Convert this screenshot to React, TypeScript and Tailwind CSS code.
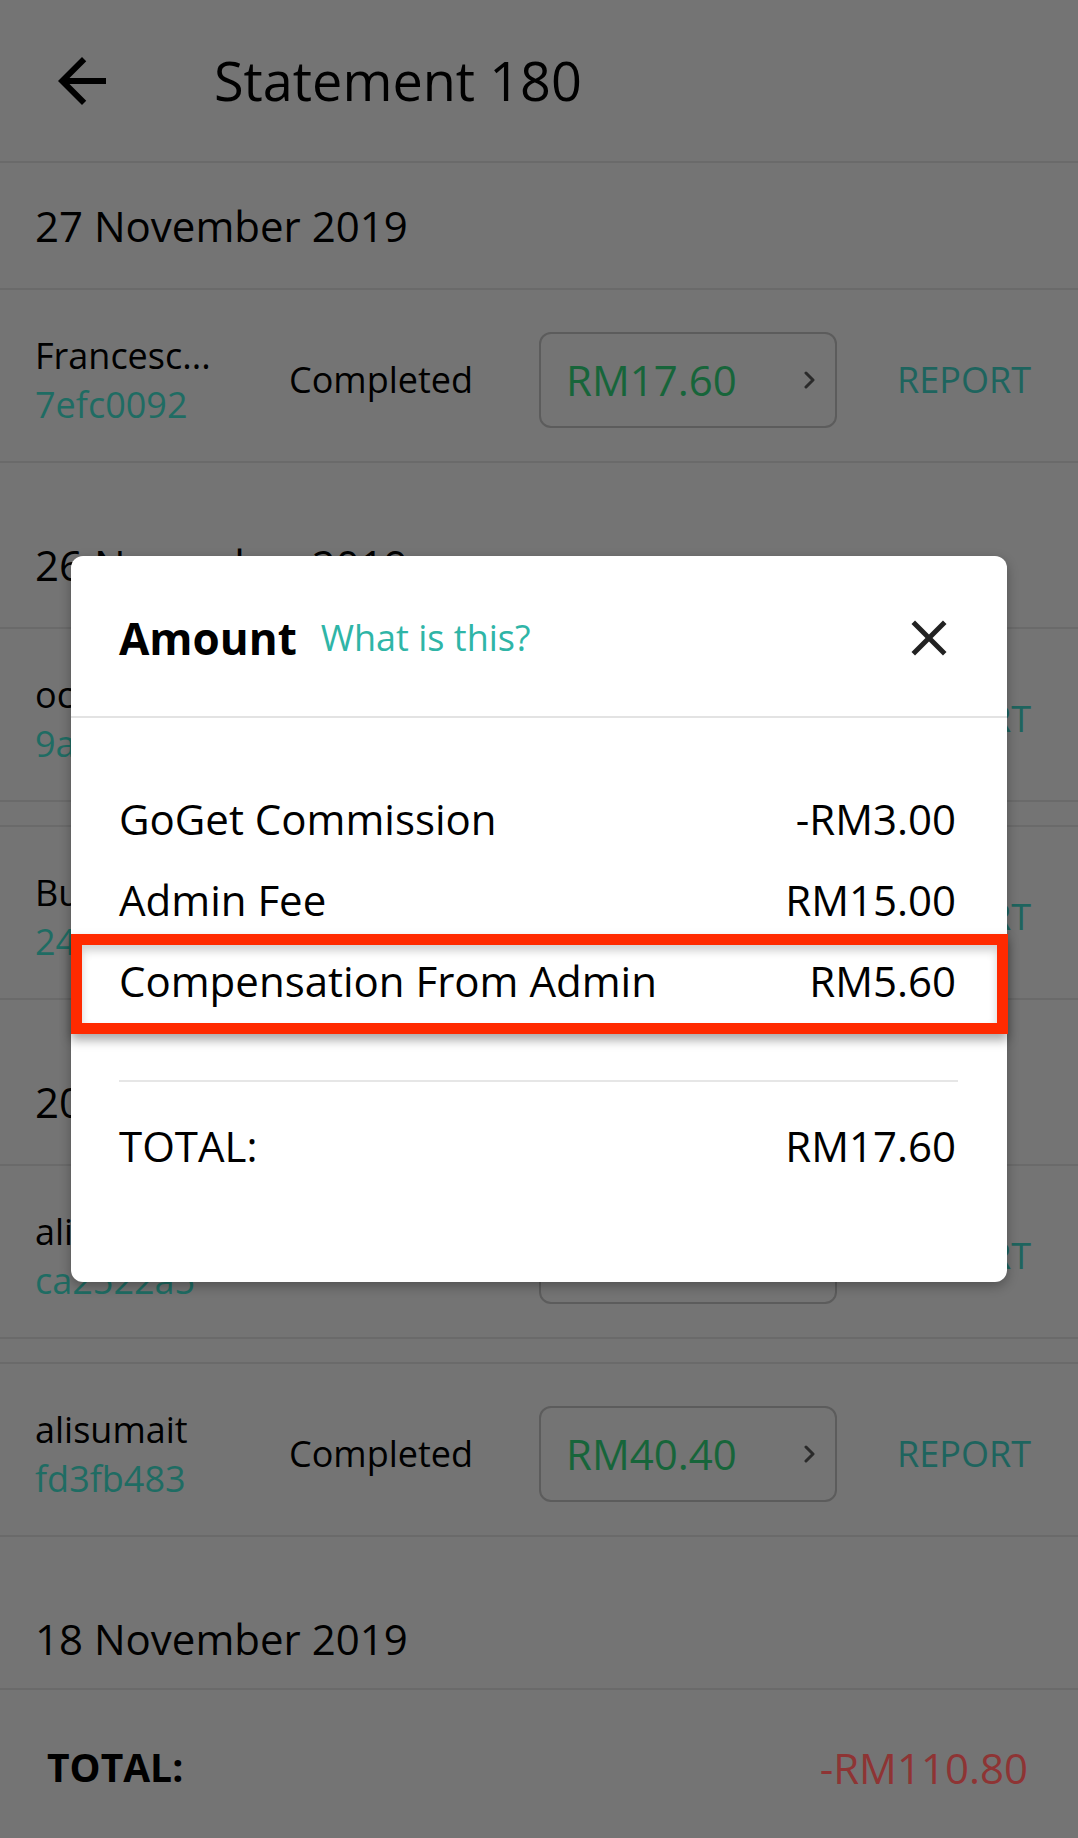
import React from 'react';

type Job = { name: string; id: string; amount: string };

function Chevron() {
  return (
    <svg className="h-[18px] w-[14px]" viewBox="0 0 14 18" fill="none">
      <path d="M3 2l7 7-7 7" stroke="#2a2a2a" strokeWidth={3} strokeLinecap="round" strokeLinejoin="round" />
    </svg>
  );
}

function DateHeader({ label, gap }: { label: string; gap?: boolean }) {
  return (
    <div className={gap ? 'pt-[39px]' : ''}>
      <div className="flex h-[127px] items-center border-b-2 border-[#6a6a6a] pl-[35px] text-[42px]">
        {label}
      </div>
    </div>
  );
}

function JobRow({ job }: { job: Job }) {
  return (
    <div className="flex h-[173px] items-center border-b-2 border-[#6a6a6a] pl-[35px] pr-[47px] pt-[8px]">
      <div className="w-[254px] text-[36px] leading-[49px]">
        <div className="truncate">{job.name}</div>
        <div className="text-[#1f6c63]">{job.id}</div>
      </div>
      <div className="w-[250px] text-[36px]">Completed</div>
      <div className="flex h-[96px] w-[298px] items-center justify-between rounded-[12px] border-2 border-[#5c5c5c] pl-[25px] pr-[18px]">
        <span className="text-[42px] text-[#17653a]">{job.amount}</span>
        <Chevron />
      </div>
      <div className="ml-auto text-[36px] text-[#1e645e]">REPORT</div>
    </div>
  );
}

function Gap() {
  return <div className="h-[25px] border-b-2 border-[#6a6a6a]" />;
}

const breakdown = [
  { label: 'GoGet Commission', value: '-RM3.00' },
  { label: 'Admin Fee', value: 'RM15.00' },
  { label: 'Compensation From Admin', value: 'RM5.60' },
];

export default function App() {
  return (
    <div className="relative flex h-[1838px] w-full flex-col overflow-hidden bg-[#747474] font-['Open_Sans',sans-serif] text-black">
      {/* Header */}
      <header className="flex h-[163px] shrink-0 items-center border-b-2 border-[#6a6a6a]">
        <svg className="ml-[46px] h-[72px] w-[72px]" viewBox="0 0 24 24" fill="#000">
          <path d="M20 11H7.83l5.59-5.59L12 4l-8 8 8 8 1.41-1.41L7.83 13H20v-2z" />
        </svg>
        <h1 className="ml-[96px] text-[54px]">Statement 180</h1>
      </header>

      {/* List */}
      <div className="flex-1 overflow-hidden">
        <DateHeader label="27 November 2019" />
        <JobRow job={{ name: 'Francesc...', id: '7efc0092', amount: 'RM17.60' }} />
        <DateHeader label="26 November 2019" gap />
        <JobRow job={{ name: 'ochong88', id: '9a41c7d2', amount: 'RM22.40' }} />
        <Gap />
        <JobRow job={{ name: 'Budiman', id: '24c8e9b1', amount: 'RM30.40' }} />
        <DateHeader label="20 November 2019" gap />
        <JobRow job={{ name: 'alisumait', id: 'ca2522a5', amount: 'RM40.40' }} />
        <Gap />
        <JobRow job={{ name: 'alisumait', id: 'fd3fb483', amount: 'RM40.40' }} />
        <DateHeader label="18 November 2019" gap />
      </div>

      {/* Footer total */}
      <footer className="flex h-[150px] shrink-0 items-center justify-between border-t-2 border-[#6a6a6a] pl-[47px] pr-[50px] pt-[6px]">
        <span className="text-[39px] font-bold">TOTAL:</span>
        <span className="text-[42px] text-[#8e3434]">-RM110.80</span>
      </footer>

      {/* Modal */}
      <div className="absolute inset-0 flex items-center justify-center">
        <div className="relative h-[726px] w-[936px] rounded-[12px] bg-white shadow-[0_4px_12px_rgba(0,0,0,0.3)]">
          <div className="flex h-[162px] items-center justify-between border-b-2 border-[#e3e3e3] pl-[48px] pr-[48px] pt-[4px]">
            <div className="flex items-center gap-[24px]">
              <span className="text-[44px] font-bold">Amount</span>
              <span className="text-[36px] text-[#2fb5a7]">What is this?</span>
            </div>
            <svg className="h-[60px] w-[60px]" viewBox="0 0 24 24" fill="#222">
              <path d="M19 6.41L17.59 5 12 10.59 6.41 5 5 6.41 10.59 12 5 17.59 6.41 19 12 13.41 17.59 19 19 17.59 13.41 12z" />
            </svg>
          </div>
          <div className="pl-[48px] pr-[51px] pt-[60px]">
            {breakdown.map((b) => (
              <div key={b.label} className="flex h-[81px] items-center justify-between text-[42px]">
                <span>{b.label}</span>
                <span>{b.value}</span>
              </div>
            ))}
            <div className="mr-[-2px] mt-[59px] border-t-2 border-[#e6e6e6]" />
            <div className="mt-[23px] flex h-[81px] items-center justify-between text-[42px]">
              <span>TOTAL:</span>
              <span>RM17.60</span>
            </div>
          </div>
          {/* highlight annotation */}
          <div className="absolute left-0 top-[378px] h-[100px] w-[937px] border-[11px] border-[#ff2a00] shadow-[0_6px_10px_rgba(0,0,0,0.35),inset_0_6px_8px_rgba(0,0,0,0.18)]" />
        </div>
      </div>
    </div>
  );
}
